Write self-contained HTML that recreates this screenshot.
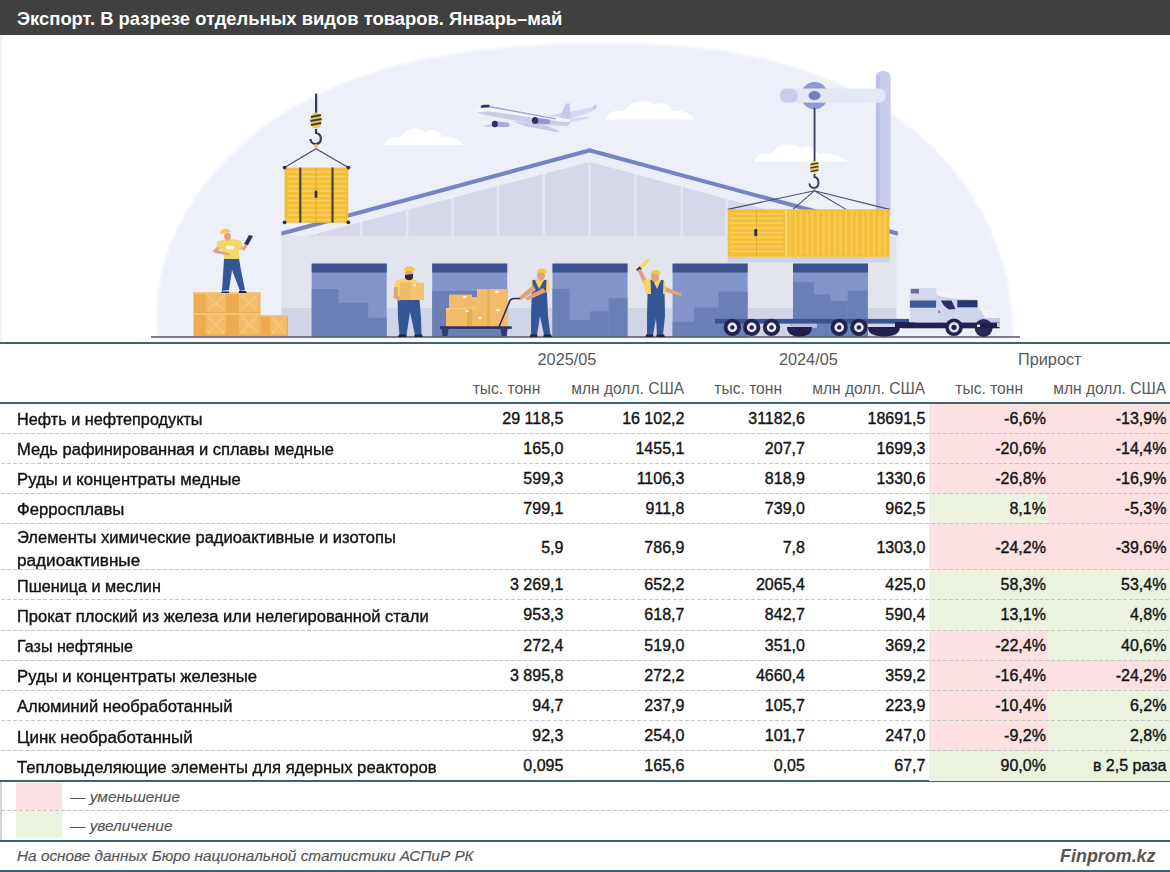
<!DOCTYPE html>
<html><head><meta charset="utf-8">
<style>
html,body{margin:0;padding:0;background:#fff;}
body{width:1170px;height:872px;position:relative;overflow:hidden;font-family:"Liberation Sans",sans-serif;}
.a{position:absolute;white-space:nowrap;line-height:1;}
#hdr{position:absolute;left:0;top:0;width:1170px;height:35px;background:#404040;}
#hdr .t{position:absolute;left:17px;top:9.6px;font-size:18.4px;font-weight:bold;color:#fff;}
svg{position:absolute;left:0;top:0;}
.ln{position:absolute;left:0;width:1170px;height:2px;background:#3a6470;}
.dl{position:absolute;left:1px;width:1169px;height:1px;background:repeating-linear-gradient(90deg,#c4c4c4 0,#c4c4c4 4px,transparent 4px,transparent 6px);}
.cell{position:absolute;}
.p{background:#fde0e1;}
.g{background:#ebf3df;}
.lab{position:absolute;left:17px;font-size:16px;color:#111;transform-origin:0 0;-webkit-text-stroke:0.35px #111;}
.num{position:absolute;font-size:16px;color:#111;text-align:right;-webkit-text-stroke:0.35px #111;}
.hd{position:absolute;font-size:15.6px;color:#595959;text-align:center;}
</style></head><body>
<div id="hdr"><span class="a t">Экспорт. В разрезе отдельных видов товаров. Январь–май</span></div>
<div style="position:absolute;left:0;top:35px;width:3px;height:308px;background:linear-gradient(90deg,#eeeeee,#fff)"></div>

<svg id="ill" width="1170" height="343" viewBox="0 0 1170 343">
<!-- ILLUSTRATION -->
<defs><filter id="db" x="-5%" y="-5%" width="110%" height="110%"><feGaussianBlur stdDeviation="1.6"/></filter></defs>
<path d="M158.7,338.7 L157.3,323.4 L157.2,308.1 L158.3,293.1 L160.6,278.3 L164.1,263.8 L168.6,249.6 L174.1,235.8 L180.5,222.4 L187.8,209.4 L195.8,196.8 L204.5,184.8 L213.9,173.2 L223.7,162.2 L234.1,151.8 L244.9,142.0 L256.1,132.8 L267.6,124.1 L279.5,116.0 L291.7,108.4 L304.3,101.4 L317.2,94.8 L330.3,88.8 L343.7,83.2 L357.4,78.0 L371.3,73.3 L385.4,69.0 L399.7,65.1 L414.1,61.6 L428.8,58.5 L443.5,55.7 L458.4,53.2 L473.3,51.1 L488.4,49.2 L503.5,47.7 L518.7,46.4 L533.8,45.4 L549.0,44.6 L564.2,44.0 L579.3,43.7 L594.4,43.5 L609.4,43.5 L624.3,43.6 L639.2,44.0 L654.0,44.5 L668.7,45.3 L683.3,46.4 L697.8,47.8 L712.3,49.5 L726.6,51.6 L740.9,54.0 L755.2,56.9 L769.3,60.2 L783.4,64.0 L797.4,68.2 L811.4,73.0 L825.2,78.4 L838.8,84.2 L852.2,90.6 L865.4,97.6 L878.2,105.1 L890.7,113.1 L902.7,121.7 L914.4,130.9 L925.5,140.7 L936.1,151.0 L946.2,161.9 L955.7,173.2 L964.5,185.1 L972.7,197.3 L980.2,210.0 L987.1,223.1 L993.1,236.6 L998.4,250.3 L1002.9,264.4 L1006.6,278.8 L1009.4,293.4 L1011.3,308.2 L1012.3,323.3 L1012.3,338.5 Z" fill="#edeff9" filter="url(#db)"/>
<!-- clouds -->
<g fill="#ffffff">
<path d="M384,145 C386,138 394,135 401,137 C405,129 417,126 425,132 C430,128 440,130 442,137 C450,135 460,139 463,145 Z"/>
<path d="M606,119.5 C608,112 617,109 624,111 C629,101 645,98 654,105 C660,101 670,104 672,111 C681,109 691,113 694,119.5 Z"/>
<path d="M754,162 C756,155 764,152 771,154 C776,144 792,141 800,148 C806,144 816,147 818,154 C828,152 844,156 848,162 Z"/>
</g>
<!-- airplane -->
<g>
<path d="M535,118 L592,107.5 C595,107 597,108 595,110 L560,123 Z" fill="#d3d8ef"/>
<path d="M592,107.5 L595.5,104.5 L597,105.5 L595,110 Z" fill="#c3c9e6"/>
<path d="M559,118 L566,103.5 L570,103.5 L569.5,121 Z" fill="#c3c9e6"/>
<path d="M563,120 L588,116.5 L589,118 L568,123 Z" fill="#d3d8ef"/>
<path d="M475.5,110 C475.5,106.5 479,104.5 484,104.5 L555,117 L569,119 L571,122 L568,126 L540,125 L484,115.5 C478.5,114.5 475.5,113 475.5,110 Z" fill="#f5f6fc"/>
<path d="M476.5,112 C480,114 483,115 487,115.5 L540,125 L568,126 L571,122 L560,121.5 L490,111.5 Z" fill="#c8cde8"/>
<path d="M490,106 L556,118.3 L555.5,119.5 L489.5,107.5 Z" fill="#9aa4d2"/>
<path d="M480.5,106.2 C482,104.6 486,104.4 490,105 L489,107.6 L481,107.8 Z" fill="#2e3466"/>
<path d="M512,121 L548,126 L560,131.5 L556,132 L525,126 Z" fill="#c5cbe7"/>
<path d="M535,117.5 L549,119.5 C551,121 551,123 549,124 L535,123.5 Z" fill="#8c97cf"/>
<ellipse cx="535" cy="120.5" rx="3.2" ry="3.6" fill="#2b3266"/>
<path d="M495,121 L508,122.5 C510,124 510,126 508,127 L495,127 Z" fill="#a7afda"/>
<path d="M484,125.5 L492,124 L492,126.5 L485,127 Z" fill="#c8cde8"/>
<ellipse cx="494.8" cy="124" rx="3" ry="3.2" fill="#2b3266"/>
</g>
<!-- WAREHOUSE -->
<polygon points="281.4,231.56810000000002 589.6,148.2 897.8,231.56809999999996 897.8,240 281.4,240" fill="#eceef7"/>
<polygon points="300,236 300,236.0 589.6,161.7 880,240.3 880,236" fill="#d4d8ea"/>
<rect x="314.3" y="234.3" width="2.5" height="1.7" fill="#e4e6f1"/>
<rect x="359.8" y="222.0" width="2.5" height="14.0" fill="#e4e6f1"/>
<rect x="405.8" y="209.6" width="2.5" height="26.4" fill="#e4e6f1"/>
<rect x="451.3" y="197.3" width="2.5" height="38.7" fill="#e4e6f1"/>
<rect x="496.8" y="185.0" width="2.5" height="51.0" fill="#e4e6f1"/>
<rect x="542.5" y="172.6" width="2.5" height="63.4" fill="#e4e6f1"/>
<rect x="588.3" y="160.2" width="2.5" height="75.8" fill="#e4e6f1"/>
<rect x="634.1" y="172.6" width="2.5" height="63.4" fill="#e4e6f1"/>
<rect x="680.5" y="185.1" width="2.5" height="50.9" fill="#e4e6f1"/>
<rect x="725.4" y="197.3" width="2.5" height="38.7" fill="#e4e6f1"/>
<rect x="770.8" y="209.5" width="2.5" height="26.5" fill="#e4e6f1"/>
<rect x="816.8" y="222.0" width="2.5" height="14.0" fill="#e4e6f1"/>
<rect x="861.8" y="234.2" width="2.5" height="1.8" fill="#e4e6f1"/>
<polygon points="279.4,230.6 589.6,147.2 899.8,230.6 899.8,243.6 589.6,161.7 279.4,243.6" fill="#eceef7"/>
<polygon points="281.4,231.6 589.6,148.2 897.8,231.6 897.8,235.8 589.6,152.39999999999998 281.4,235.8" fill="#7384c4"/>
<rect x="281.4" y="236" width="614.9" height="101" fill="#e2e4ee"/>
<rect x="281.4" y="308" width="614.9" height="29" fill="#d0d4e7"/>
<rect x="311.7" y="263.6" width="75" height="73" fill="#8294c9"/>
<rect x="311.7" y="289.1" width="26.8" height="47.9" fill="#6a7fb5"/>
<rect x="338.5" y="302.8" width="29.7" height="34.2" fill="#6a7fb5"/>
<rect x="368.2" y="317.9" width="18.5" height="19.1" fill="#6a7fb5"/>
<rect x="311.7" y="263.6" width="75" height="8.9" fill="#3d5391"/>
<rect x="432.2" y="263.6" width="75" height="73" fill="#8294c9"/>
<rect x="432.2" y="291" width="22.8" height="46.0" fill="#6a7fb5"/>
<rect x="455" y="291" width="52.0" height="46.0" fill="#6a7fb5"/>
<rect x="432.2" y="263.6" width="75" height="8.9" fill="#3d5391"/>
<rect x="552.5" y="263.6" width="75" height="73" fill="#8294c9"/>
<rect x="552.5" y="288.8" width="17.2" height="48.2" fill="#6a7fb5"/>
<rect x="569.7" y="319.9" width="20.1" height="17.1" fill="#6a7fb5"/>
<rect x="589.8" y="311.4" width="18.8" height="25.6" fill="#6a7fb5"/>
<rect x="608.6" y="298.2" width="18.9" height="38.8" fill="#6a7fb5"/>
<rect x="552.5" y="263.6" width="75" height="8.9" fill="#3d5391"/>
<rect x="672.6" y="263.6" width="75" height="73" fill="#8294c9"/>
<rect x="672.6" y="321.8" width="21.6" height="15.2" fill="#6a7fb5"/>
<rect x="694.2" y="307.6" width="24.4" height="29.4" fill="#6a7fb5"/>
<rect x="718.6" y="291.7" width="29.0" height="45.3" fill="#6a7fb5"/>
<rect x="672.6" y="263.6" width="75" height="8.9" fill="#3d5391"/>
<rect x="793.0" y="263.6" width="75" height="73" fill="#8294c9"/>
<rect x="793" y="282.3" width="20.8" height="54.7" fill="#6a7fb5"/>
<rect x="813.8" y="294.5" width="16.9" height="42.5" fill="#6a7fb5"/>
<rect x="830.7" y="301" width="16.9" height="36.0" fill="#6a7fb5"/>
<rect x="847.6" y="290.7" width="20.1" height="46.3" fill="#6a7fb5"/>
<rect x="793.0" y="263.6" width="75" height="8.9" fill="#3d5391"/>
<!-- /WAREHOUSE -->
<!-- right crane -->
<g>
<rect x="875.8" y="71" width="14.8" height="150" rx="6" fill="#c8cee9"/>
<rect x="876" y="76" width="4" height="145" fill="#b9c0e1"/>
<rect x="779.8" y="88.5" width="106" height="14.2" rx="7" fill="#e4e7f4"/>
<rect x="779.8" y="88.5" width="18" height="14.2" rx="7" fill="#c8cee9"/>
<circle cx="814.5" cy="95.6" r="13.5" fill="#8b9bd4"/>
<rect x="800" y="88.5" width="29" height="14.2" fill="#e4e7f4"/>
<ellipse cx="814.5" cy="95.6" rx="6" ry="4.5" fill="#6f81c3"/>
</g>

<!-- CONTAINERS -->
<rect x="315" y="93.6" width="2.2" height="20" fill="#363a5e"/>
<ellipse cx="316" cy="120.5" rx="6" ry="8" fill="#f3cc4a"/>
<path d="M311,117 L321,115 M310.5,121 L321.5,119 M311,125 L321,123" stroke="#3d3a4a" stroke-width="1.8"/>
<path d="M316,129 L316,133 C322,134 323,143 316,144 C312,144 310.5,141 310.5,139" fill="none" stroke="#363a5e" stroke-width="2.2"/>
<circle cx="316" cy="146" r="2" fill="#f0c34a"/>
<path d="M284.6,167.6 L316,148.7 L348.3,167.6" fill="none" stroke="#4a4d6e" stroke-width="1.2"/>
<rect x="284.6" y="167.6" width="63.7" height="55.1" fill="#f4bf38"/>
<rect x="287" y="171.0" width="59" height="1.6" fill="#f8d061"/>
<rect x="287" y="175.8" width="59" height="1.6" fill="#f8d061"/>
<rect x="287" y="180.6" width="59" height="1.6" fill="#f8d061"/>
<rect x="287" y="185.4" width="59" height="1.6" fill="#f8d061"/>
<rect x="287" y="190.2" width="59" height="1.6" fill="#f8d061"/>
<rect x="287" y="195.0" width="59" height="1.6" fill="#f8d061"/>
<rect x="287" y="199.8" width="59" height="1.6" fill="#f8d061"/>
<rect x="287" y="204.6" width="59" height="1.6" fill="#f8d061"/>
<rect x="287" y="209.4" width="59" height="1.6" fill="#f8d061"/>
<rect x="287" y="214.2" width="59" height="1.6" fill="#f8d061"/>
<rect x="287" y="219.0" width="59" height="1.6" fill="#f8d061"/>
<rect x="315.3" y="168" width="1.4" height="54.5" fill="#e8ad2a"/>
<rect x="299.2" y="167.6" width="2.2" height="55.1" fill="#4d4430"/>
<rect x="331.4" y="167.6" width="2.2" height="55.1" fill="#4d4430"/>
<rect x="314.6" y="190.5" width="2.8" height="7.5" rx="1.2" fill="#2f2f4a"/>
<circle cx="284.6" cy="167.6" r="1.9" fill="#2f2f4a"/>
<circle cx="348.3" cy="167.6" r="1.9" fill="#2f2f4a"/>
<circle cx="284.6" cy="222.3" r="1.9" fill="#2f2f4a"/>
<circle cx="348.3" cy="222.3" r="1.9" fill="#2f2f4a"/>
<rect x="813.6" y="108" width="1.9" height="53" fill="#3f4262"/>
<ellipse cx="814.5" cy="167" rx="4.3" ry="6" fill="#f3cc4a"/>
<path d="M810.5,164.5 L818.5,163 M810.3,168 L818.7,166.5 M810.5,171.5 L818.5,170" stroke="#3d3a4a" stroke-width="1.4"/>
<path d="M814.5,174 L814.5,177 C819.5,178 820,187 814.5,188 C811,188 809.5,185.5 809.5,183.5" fill="none" stroke="#363a5e" stroke-width="1.9"/>
<circle cx="814.5" cy="190" r="1.6" fill="#f0c34a"/>
<path d="M727.7,209.4 L814.5,190.7 L889.5,209.4 M793,209.4 L814.5,190.7 L846,209.4" fill="none" stroke="#4a4d6e" stroke-width="1.1"/>
<rect x="727.7" y="256.8" width="161.8" height="5.6" fill="#cdd2e7"/>
<rect x="727.7" y="209.4" width="161.8" height="47.4" fill="#f4bf38"/>
<rect x="730" y="213.0" width="53" height="1.5" fill="#f8d061"/>
<rect x="730" y="217.7" width="53" height="1.5" fill="#f8d061"/>
<rect x="730" y="222.4" width="53" height="1.5" fill="#f8d061"/>
<rect x="730" y="227.1" width="53" height="1.5" fill="#f8d061"/>
<rect x="730" y="231.8" width="53" height="1.5" fill="#f8d061"/>
<rect x="730" y="236.5" width="53" height="1.5" fill="#f8d061"/>
<rect x="730" y="241.2" width="53" height="1.5" fill="#f8d061"/>
<rect x="730" y="245.9" width="53" height="1.5" fill="#f8d061"/>
<rect x="730" y="250.6" width="53" height="1.5" fill="#f8d061"/>
<rect x="789.0" y="211" width="2" height="44" fill="#f7cc55"/>
<rect x="794.6" y="211" width="2" height="44" fill="#f7cc55"/>
<rect x="800.2" y="211" width="2" height="44" fill="#f7cc55"/>
<rect x="805.8" y="211" width="2" height="44" fill="#f7cc55"/>
<rect x="811.4" y="211" width="2" height="44" fill="#f7cc55"/>
<rect x="817.0" y="211" width="2" height="44" fill="#f7cc55"/>
<rect x="822.6" y="211" width="2" height="44" fill="#f7cc55"/>
<rect x="828.2" y="211" width="2" height="44" fill="#f7cc55"/>
<rect x="833.8" y="211" width="2" height="44" fill="#f7cc55"/>
<rect x="839.4" y="211" width="2" height="44" fill="#f7cc55"/>
<rect x="845.0" y="211" width="2" height="44" fill="#f7cc55"/>
<rect x="850.6" y="211" width="2" height="44" fill="#f7cc55"/>
<rect x="856.2" y="211" width="2" height="44" fill="#f7cc55"/>
<rect x="861.8" y="211" width="2" height="44" fill="#f7cc55"/>
<rect x="867.4" y="211" width="2" height="44" fill="#f7cc55"/>
<rect x="873.0" y="211" width="2" height="44" fill="#f7cc55"/>
<rect x="878.6" y="211" width="2" height="44" fill="#f7cc55"/>
<rect x="884.2" y="211" width="2" height="44" fill="#f7cc55"/>
<rect x="756" y="210" width="1" height="46" fill="#e8ad2a"/>
<rect x="785" y="209.4" width="2.2" height="47.4" fill="#f9da7c"/>
<rect x="754.3" y="229" width="3" height="7.3" rx="1.2" fill="#2f2f4a"/>
<!-- /CONTAINERS -->
<!-- PEOPLE -->
<rect x="151" y="336.2" width="869" height="1.6" fill="#5e5c76"/>
<rect x="193.5" y="292.4" width="33.5" height="21" fill="#eeab4f"/>
<rect x="205.6" y="293.9" width="20.4" height="18" fill="#f2bb6a"/>
<path d="M207.6,295.4 L224.0,310.4 M224.0,295.4 L207.6,310.4" stroke="#f5c683" stroke-width="1.6"/>
<rect x="193.5" y="292.4" width="33.5" height="1.6" fill="#f4c47c"/>
<rect x="227" y="292.4" width="33.4" height="21" fill="#eeab4f"/>
<rect x="239.0" y="293.9" width="20.4" height="18" fill="#f2bb6a"/>
<path d="M241.0,295.4 L257.4,310.4 M257.4,295.4 L241.0,310.4" stroke="#f5c683" stroke-width="1.6"/>
<rect x="227" y="292.4" width="33.4" height="1.6" fill="#f4c47c"/>
<rect x="193.5" y="313.4" width="33.5" height="22.6" fill="#eeab4f"/>
<rect x="205.6" y="314.9" width="20.4" height="19.6" fill="#f2bb6a"/>
<path d="M207.6,316.4 L224.0,333.0 M224.0,316.4 L207.6,333.0" stroke="#f5c683" stroke-width="1.6"/>
<rect x="193.5" y="313.4" width="33.5" height="1.6" fill="#f4c47c"/>
<rect x="227" y="313.4" width="33.4" height="22.6" fill="#eeab4f"/>
<rect x="239.0" y="314.9" width="20.4" height="19.6" fill="#f2bb6a"/>
<path d="M241.0,316.4 L257.4,333.0 M257.4,316.4 L241.0,333.0" stroke="#f5c683" stroke-width="1.6"/>
<rect x="227" y="313.4" width="33.4" height="1.6" fill="#f4c47c"/>
<rect x="260.4" y="315.1" width="27.6" height="20.9" fill="#eeab4f"/>
<rect x="270.3" y="316.6" width="16.7" height="17.9" fill="#f2bb6a"/>
<path d="M272.3,318.1 L285.0,333.0 M285.0,318.1 L272.3,333.0" stroke="#f5c683" stroke-width="1.6"/>
<rect x="260.4" y="315.1" width="27.6" height="1.6" fill="#f4c47c"/>
<path d="M224,259 L239,259 L241,270 L245,290 L240,291 L232,270 L229,290 L222,291 Z" fill="#345596"/>
<path d="M222,291.5 L229,291.5 L229,293 L221,293 Z M239,291 L246,291 L247,293 L239,293 Z" fill="#24263f"/>
<path d="M217,242 C220,239 236,238 241,241 L243,249 L239,250 L239,259 L224,259 L223,250 L216,249 Z" fill="#f5d468"/>
<ellipse cx="230" cy="247.5" rx="4.5" ry="2" fill="#fff8e0"/>
<path d="M217,247 L212.5,251 L215,253 L229,255.5 L229.5,253.5 L218,250 L220,248 Z" fill="#e3a27d"/>
<path d="M240,248 L244,251 L249,244 L247,243 L243,247 Z" fill="#e3a27d"/>
<path d="M244,244 L249,235 L253,236 L248,245 Z" fill="#2d2f66"/>
<ellipse cx="227.5" cy="236.5" rx="3.3" ry="4" fill="#e3a27d"/>
<path d="M220,233.5 C220,229 226,227.5 229,230 L231,232 L226,232.5 L221,234 Z" fill="#f3c940"/>
<path d="M397.6,299.5 L419.5,299.5 L421,318 L421.5,335 L415,335 L410,312 L406.5,335 L399.5,335 L398,318 Z" fill="#345596"/>
<path d="M399,334.5 L406.5,334.5 L406.5,337 L398,337 Z M414.5,334.5 L422,334.5 L423,337 L414.5,337 Z" fill="#24263f"/>
<path d="M396,281 C399,278 412,277.5 417,281 L418,300 L397,300 L394,295 L394,286 Z" fill="#f5d468"/>
<path d="M394,287 L393.5,298 L400,301 L401,297 L397.5,295 L398,287 Z" fill="#e3a27d"/>
<ellipse cx="409" cy="274.5" rx="4.2" ry="5" fill="#e3a27d"/>
<path d="M405,275 L413,274 L413,278 C411,281 407,281 405,278 Z" fill="#2b2b3c"/>
<path d="M404,271 C404,266 411,265 414,268 L415,271 Z" fill="#f3c940"/>
<rect x="399.8" y="282.6" width="24.2" height="17.4" fill="#f2c66e"/>
<rect x="399.8" y="282.6" width="11" height="17.4" fill="#edbb62"/>
<circle cx="414.5" cy="285" r="1.5" fill="#fff3da"/>
<path d="M446,327 L446,308 L449,308 L449,294.5 L472,294.5 L472,297 L477,297 L477,289 L508,289 L508,327 Z" fill="#f1bc6a"/>
<rect x="467" y="308" width="5" height="19" fill="#e9a94e"/>
<rect x="487" y="289" width="3" height="38" fill="#eab055"/>
<rect x="446" y="308" width="30" height="1.2" fill="#f4c98a"/>
<ellipse cx="465" cy="297" rx="2" ry="1.3" fill="#fff3d8"/>
<ellipse cx="497" cy="292" rx="2" ry="1.3" fill="#fff3d8"/>
<ellipse cx="467" cy="311" rx="2" ry="1.3" fill="#fff3d8"/>
<ellipse cx="498" cy="310" rx="2" ry="1.3" fill="#fff3d8"/>
<ellipse cx="480" cy="318" rx="2" ry="1.3" fill="#fff3d8"/>
<rect x="440" y="326.3" width="71.7" height="2.6" fill="#2d2f64"/>
<path d="M441.5,329 L448.5,329 L447.5,336 L442.5,336 Z M500.5,329 L507.5,329 L506.5,336 L501.5,336 Z" fill="#2f3b78"/>
<path d="M499,327 L510,300.5 C511,299 512,298.5 514,298.5 L522,298.5" fill="none" stroke="#2d2f64" stroke-width="1.6"/>
<path d="M531.8,292 L547,292 L548,316 L550.5,335 L544,335 L540,316 L537,335 L531,335 L531,316 Z" fill="#345596"/>
<path d="M530.5,334.5 L537.5,334.5 L537,337 L529.5,337 Z M543.5,334.5 L551,334.5 L552,337 L543.5,337 Z" fill="#24263f"/>
<path d="M531,281 C535,277.5 545,277 549,281 L549.5,292.5 L531,292.5 Z" fill="#f5d468"/>
<path d="M532.5,280 L535,280 L539,289 L544,280 L546.5,280 L546,292.5 L533,292.5 Z" fill="#345596"/>
<path d="M533,285 L519,297 L521,300 L536,290 Z M543,288 L525,298 L527,300.5 L546,292 Z" fill="#e3a27d"/>
<ellipse cx="541" cy="275.5" rx="4" ry="5" fill="#e3a27d"/>
<path d="M536.5,272.5 C537,268 544,267.5 546.5,270.5 L547,273 Z" fill="#f3c940"/>
<path d="M638.5,267 L648,258.5 L650,260.5 L641,269.5 Z" fill="#f6d94e"/>
<path d="M636,269.5 L639.5,266.5 L642,269 L638.5,272 Z" fill="#3a3a4a"/>
<path d="M637.5,270 L641,269 L647,281 L644,285 Z" fill="#e3a27d"/>
<path d="M663,286 L681.6,293.5 L681,296 L662,291 Z" fill="#e3a27d"/>
<path d="M643,281 C648,278 660,278 665,282 L666,294 L646,294 Z" fill="#f5d468"/>
<path d="M647.5,294 L664.6,294 L665,316 L663,335 L657,335 L656,318 L653,335 L647,335 L647,316 Z" fill="#345596"/>
<path d="M650.5,280 L653,280 L657,289 L661,280 L663.5,280 L663,294.5 L651,294.5 Z" fill="#345596"/>
<path d="M646,334.5 L653.5,334.5 L653,337 L645.5,337 Z M656.5,334.5 L664,334.5 L665,337 L656.5,337 Z" fill="#24263f"/>
<ellipse cx="655" cy="277" rx="4" ry="5" fill="#e3a27d"/>
<path d="M650.5,274 C651,269.5 658,269 660,272 L660.5,274.5 Z" fill="#f3c940"/>
<!-- /PEOPLE -->
<!-- VEHICLES -->
<rect x="790" y="321.8" width="27" height="6" fill="#b4bde0"/>
<path d="M787,327 L812,327 C812,333 808,336.5 799.5,336.5 C791,336.5 787,333 787,327 Z M868,327 L900,327 C900,333 895,336.5 884,336.5 C873,336.5 868,333 868,327 Z" fill="#22204d"/>
<rect x="715" y="318.9" width="194" height="4.7" fill="#3d5391"/>
<rect x="895" y="322" width="20" height="6" fill="#22204d"/>
<circle cx="732.3" cy="327.4" r="8.6" fill="#22204d"/>
<circle cx="732.3" cy="327.4" r="4.8" fill="#e8e9f6"/>
<circle cx="732.3" cy="327.4" r="2.2" fill="#22204d"/>
<circle cx="751.7" cy="327.4" r="8.6" fill="#22204d"/>
<circle cx="751.7" cy="327.4" r="4.8" fill="#e8e9f6"/>
<circle cx="751.7" cy="327.4" r="2.2" fill="#22204d"/>
<circle cx="771.5" cy="327.4" r="8.6" fill="#22204d"/>
<circle cx="771.5" cy="327.4" r="4.8" fill="#e8e9f6"/>
<circle cx="771.5" cy="327.4" r="2.2" fill="#22204d"/>
<circle cx="839.2" cy="327.4" r="8.6" fill="#22204d"/>
<circle cx="839.2" cy="327.4" r="4.8" fill="#e8e9f6"/>
<circle cx="839.2" cy="327.4" r="2.2" fill="#22204d"/>
<circle cx="858.9" cy="327.4" r="8.6" fill="#22204d"/>
<circle cx="858.9" cy="327.4" r="4.8" fill="#e8e9f6"/>
<circle cx="858.9" cy="327.4" r="2.2" fill="#22204d"/>
<path d="M926,288 C935,289 950,293 962,296.5 L976,298.5 L976,302 L926,302 Z" fill="#f1f2f9"/>
<path d="M929,289.5 C933,295 942,297.5 955,298.5 L976,300 L976,304 L930,304 Z" fill="#c9cfe9"/>
<rect x="909.9" y="287.9" width="26.4" height="34.7" fill="#d3d8ee"/>
<rect x="911" y="289" width="8" height="4.5" fill="#6a6f94"/>
<rect x="909.9" y="300.5" width="26.4" height="7.2" fill="#3f5b9a"/>
<path d="M936.3,298.5 L976,299.5 L977.5,307 L988,309.5 C995,311.5 998,314 999,318 L999.5,323 L936.3,323 Z" fill="#cfd5ec"/>
<path d="M977.5,307 L988,309.5 C995,311.5 998,314 999,318 L985,318 C983,313 980,309.5 977.5,307 Z" fill="#f3f4fa"/>
<path d="M941,300.5 L951.5,300.5 L955.5,309 L949,309.5 C945,307 942,304 941,300.5 Z" fill="#2a2f6b"/>
<rect x="957.3" y="300.2" width="20.2" height="7.1" fill="#2a3470"/>
<rect x="938.5" y="310.5" width="1.5" height="2.5" fill="#6a6f94"/>
<rect x="977" y="318" width="23" height="5" fill="#c3c9e6"/>
<circle cx="983.6" cy="328" r="9" fill="#2a2a5a"/>
<rect x="902" y="322.6" width="97.6" height="5.7" fill="#231f52"/>
<rect x="977" y="324.5" width="3" height="2.5" fill="#efe6b0"/>
<rect x="997" y="323" width="3" height="4" fill="#d9cf90"/>
<circle cx="954" cy="327.3" r="8.8" fill="#231f52"/>
<circle cx="954" cy="327.3" r="5.3" fill="#dcdcf2"/>
<circle cx="954" cy="327.3" r="2.6" fill="#231f52"/>
<!-- /VEHICLES -->
<!-- /ILLUSTRATION -->
</svg>

<div id="tbl">
<div class="ln" style="top:342px"></div>
<div class="ln" style="top:402.3px"></div>
<div class="ln" style="top:780.4px"></div>
<div class="ln" style="top:840px"></div>
<div class="ln" style="top:870px"></div>
<div class="cell p" style="left:928.5px;top:403.5px;width:119.5px;height:29.80000000000001px"></div>
<div class="cell p" style="left:1048px;top:403.5px;width:122px;height:29.80000000000001px"></div>
<div class="cell p" style="left:928.5px;top:433.3px;width:119.5px;height:30.0px"></div>
<div class="cell p" style="left:1048px;top:433.3px;width:122px;height:30.0px"></div>
<div class="cell p" style="left:928.5px;top:463.3px;width:119.5px;height:30.099999999999966px"></div>
<div class="cell p" style="left:1048px;top:463.3px;width:122px;height:30.099999999999966px"></div>
<div class="cell g" style="left:928.5px;top:493.4px;width:119.5px;height:30.0px"></div>
<div class="cell p" style="left:1048px;top:493.4px;width:122px;height:30.0px"></div>
<div class="cell p" style="left:928.5px;top:523.4px;width:119.5px;height:46.200000000000045px"></div>
<div class="cell p" style="left:1048px;top:523.4px;width:122px;height:46.200000000000045px"></div>
<div class="cell g" style="left:928.5px;top:569.6px;width:119.5px;height:30.200000000000045px"></div>
<div class="cell g" style="left:1048px;top:569.6px;width:122px;height:30.200000000000045px"></div>
<div class="cell g" style="left:928.5px;top:599.8000000000001px;width:119.5px;height:30.199999999999932px"></div>
<div class="cell g" style="left:1048px;top:599.8000000000001px;width:122px;height:30.199999999999932px"></div>
<div class="cell p" style="left:928.5px;top:630.0px;width:119.5px;height:30.200000000000045px"></div>
<div class="cell g" style="left:1048px;top:630.0px;width:122px;height:30.200000000000045px"></div>
<div class="cell p" style="left:928.5px;top:660.2px;width:119.5px;height:30.199999999999932px"></div>
<div class="cell p" style="left:1048px;top:660.2px;width:122px;height:30.199999999999932px"></div>
<div class="cell p" style="left:928.5px;top:690.4px;width:119.5px;height:30.200000000000045px"></div>
<div class="cell g" style="left:1048px;top:690.4px;width:122px;height:30.200000000000045px"></div>
<div class="cell p" style="left:928.5px;top:720.6px;width:119.5px;height:30.199999999999932px"></div>
<div class="cell g" style="left:1048px;top:720.6px;width:122px;height:30.199999999999932px"></div>
<div class="cell g" style="left:928.5px;top:750.8px;width:119.5px;height:30.200000000000045px"></div>
<div class="cell g" style="left:1048px;top:750.8px;width:122px;height:30.200000000000045px"></div>
<div class="dl" style="top:432.8px"></div>
<div class="dl" style="top:462.8px"></div>
<div class="dl" style="top:492.9px"></div>
<div class="dl" style="top:522.9px"></div>
<div class="dl" style="top:569.1px"></div>
<div class="dl" style="top:599.3px"></div>
<div class="dl" style="top:629.5px"></div>
<div class="dl" style="top:659.7px"></div>
<div class="dl" style="top:689.9px"></div>
<div class="dl" style="top:720.1px"></div>
<div class="dl" style="top:750.3px"></div>
<div class="dl" style="top:810.3px"></div>
<div class="a lab" style="top:412.2px;transform:scaleX(1.015)">Нефть и нефтепродукты</div>
<div class="a num" style="right:606.6px;top:410.8px">29 118,5</div>
<div class="a num" style="right:485.6px;top:410.8px">16 102,2</div>
<div class="a num" style="right:365.1px;top:410.8px">31182,6</div>
<div class="a num" style="right:244.6px;top:410.8px">18691,5</div>
<div class="a num" style="right:124.1px;top:410.8px">-6,6%</div>
<div class="a num" style="right:3.6px;top:410.8px">-13,9%</div>
<div class="a lab" style="top:442.1px;transform:scaleX(1.031)">Медь рафинированная и сплавы медные</div>
<div class="a num" style="right:606.6px;top:440.7px">165,0</div>
<div class="a num" style="right:485.6px;top:440.7px">1455,1</div>
<div class="a num" style="right:365.1px;top:440.7px">207,7</div>
<div class="a num" style="right:244.6px;top:440.7px">1699,3</div>
<div class="a num" style="right:124.1px;top:440.7px">-20,6%</div>
<div class="a num" style="right:3.6px;top:440.7px">-14,4%</div>
<div class="a lab" style="top:472.2px;transform:scaleX(1.043)">Руды и концентраты медные</div>
<div class="a num" style="right:606.6px;top:470.8px">599,3</div>
<div class="a num" style="right:485.6px;top:470.8px">1106,3</div>
<div class="a num" style="right:365.1px;top:470.8px">818,9</div>
<div class="a num" style="right:244.6px;top:470.8px">1330,6</div>
<div class="a num" style="right:124.1px;top:470.8px">-26,8%</div>
<div class="a num" style="right:3.6px;top:470.8px">-16,9%</div>
<div class="a lab" style="top:502.2px;transform:scaleX(1.045)">Ферросплавы</div>
<div class="a num" style="right:606.6px;top:500.8px">799,1</div>
<div class="a num" style="right:485.6px;top:500.8px">911,8</div>
<div class="a num" style="right:365.1px;top:500.8px">739,0</div>
<div class="a num" style="right:244.6px;top:500.8px">962,5</div>
<div class="a num" style="right:124.1px;top:500.8px">8,1%</div>
<div class="a num" style="right:3.6px;top:500.8px">-5,3%</div>
<div class="a lab" style="top:530.4px;transform:scaleX(1.034)">Элементы химические радиоактивные и изотопы</div>
<div class="a lab" style="top:552.6px;transform:scaleX(1.071)">радиоактивные</div>
<div class="a num" style="right:606.6px;top:539.9px">5,9</div>
<div class="a num" style="right:485.6px;top:539.9px">786,9</div>
<div class="a num" style="right:365.1px;top:539.9px">7,8</div>
<div class="a num" style="right:244.6px;top:539.9px">1303,0</div>
<div class="a num" style="right:124.1px;top:539.9px">-24,2%</div>
<div class="a num" style="right:3.6px;top:539.9px">-39,6%</div>
<div class="a lab" style="top:578.5px;transform:scaleX(1.014)">Пшеница и меслин</div>
<div class="a num" style="right:606.6px;top:577.1px">3 269,1</div>
<div class="a num" style="right:485.6px;top:577.1px">652,2</div>
<div class="a num" style="right:365.1px;top:577.1px">2065,4</div>
<div class="a num" style="right:244.6px;top:577.1px">425,0</div>
<div class="a num" style="right:124.1px;top:577.1px">58,3%</div>
<div class="a num" style="right:3.6px;top:577.1px">53,4%</div>
<div class="a lab" style="top:608.7px;transform:scaleX(1.032)">Прокат плоский из железа или нелегированной стали</div>
<div class="a num" style="right:606.6px;top:607.3px">953,3</div>
<div class="a num" style="right:485.6px;top:607.3px">618,7</div>
<div class="a num" style="right:365.1px;top:607.3px">842,7</div>
<div class="a num" style="right:244.6px;top:607.3px">590,4</div>
<div class="a num" style="right:124.1px;top:607.3px">13,1%</div>
<div class="a num" style="right:3.6px;top:607.3px">4,8%</div>
<div class="a lab" style="top:638.9px;transform:scaleX(1.004)">Газы нефтяные</div>
<div class="a num" style="right:606.6px;top:637.5px">272,4</div>
<div class="a num" style="right:485.6px;top:637.5px">519,0</div>
<div class="a num" style="right:365.1px;top:637.5px">351,0</div>
<div class="a num" style="right:244.6px;top:637.5px">369,2</div>
<div class="a num" style="right:124.1px;top:637.5px">-22,4%</div>
<div class="a num" style="right:3.6px;top:637.5px">40,6%</div>
<div class="a lab" style="top:669.1px;transform:scaleX(1.044)">Руды и концентраты железные</div>
<div class="a num" style="right:606.6px;top:667.7px">3 895,8</div>
<div class="a num" style="right:485.6px;top:667.7px">272,2</div>
<div class="a num" style="right:365.1px;top:667.7px">4660,4</div>
<div class="a num" style="right:244.6px;top:667.7px">359,2</div>
<div class="a num" style="right:124.1px;top:667.7px">-16,4%</div>
<div class="a num" style="right:3.6px;top:667.7px">-24,2%</div>
<div class="a lab" style="top:699.3px;transform:scaleX(1.034)">Алюминий необработанный</div>
<div class="a num" style="right:606.6px;top:697.9px">94,7</div>
<div class="a num" style="right:485.6px;top:697.9px">237,9</div>
<div class="a num" style="right:365.1px;top:697.9px">105,7</div>
<div class="a num" style="right:244.6px;top:697.9px">223,9</div>
<div class="a num" style="right:124.1px;top:697.9px">-10,4%</div>
<div class="a num" style="right:3.6px;top:697.9px">6,2%</div>
<div class="a lab" style="top:729.5px;transform:scaleX(1.055)">Цинк необработанный</div>
<div class="a num" style="right:606.6px;top:728.1px">92,3</div>
<div class="a num" style="right:485.6px;top:728.1px">254,0</div>
<div class="a num" style="right:365.1px;top:728.1px">101,7</div>
<div class="a num" style="right:244.6px;top:728.1px">247,0</div>
<div class="a num" style="right:124.1px;top:728.1px">-9,2%</div>
<div class="a num" style="right:3.6px;top:728.1px">2,8%</div>
<div class="a lab" style="top:759.7px;transform:scaleX(1.042)">Тепловыделяющие элементы для ядерных реакторов</div>
<div class="a num" style="right:606.6px;top:758.3px">0,095</div>
<div class="a num" style="right:485.6px;top:758.3px">165,6</div>
<div class="a num" style="right:365.1px;top:758.3px">0,05</div>
<div class="a num" style="right:244.6px;top:758.3px">67,7</div>
<div class="a num" style="right:124.1px;top:758.3px">90,0%</div>
<div class="a num" style="right:3.6px;top:758.3px">в 2,5 раза</div>
<div class="a hd" style="left:467px;width:200px;top:351.4px;font-size:16.3px">2025/05</div>
<div class="a hd" style="left:708.4px;width:200px;top:351.4px;font-size:16.3px">2024/05</div>
<div class="a hd" style="left:949.8px;width:200px;top:351.4px;font-size:16.3px">Прирост</div>
<div class="a hd" style="left:406.5px;width:200px;top:380.9px">тыс. тонн</div>
<div class="a hd" style="left:527.7px;width:200px;top:380.9px">млн долл. США</div>
<div class="a hd" style="left:648.2px;width:200px;top:380.9px">тыс. тонн</div>
<div class="a hd" style="left:768.7px;width:200px;top:380.9px">млн долл. США</div>
<div class="a hd" style="left:889.2px;width:200px;top:380.9px">тыс. тонн</div>
<div class="a hd" style="left:1009.7px;width:200px;top:380.9px">млн долл. США</div>
<div style="position:absolute;left:0;top:782px;width:2px;height:58px;background:#d4d4d4"></div>
<div class="cell p" style="left:16px;top:783px;width:46px;height:27px"></div>
<div class="cell g" style="left:16px;top:811px;width:46px;height:27px"></div>
<div class="a" style="left:70px;top:788.6px;font-size:15.4px;font-style:italic;color:#555;-webkit-text-stroke:0.15px #555">— уменьшение</div>
<div class="a" style="left:70px;top:818.4px;font-size:15.4px;font-style:italic;color:#555;-webkit-text-stroke:0.15px #555">— увеличение</div>
<div class="a" style="left:17px;top:848px;font-size:15.35px;font-style:italic;color:#555;-webkit-text-stroke:0.15px #555">На основе данных Бюро национальной статистики АСПиР РК</div>
<div class="a" style="right:14.5px;top:847.6px;font-size:17.9px;font-style:italic;font-weight:bold;color:#555">Finprom.kz</div>
</div><!--/tbl-->
</body></html>
